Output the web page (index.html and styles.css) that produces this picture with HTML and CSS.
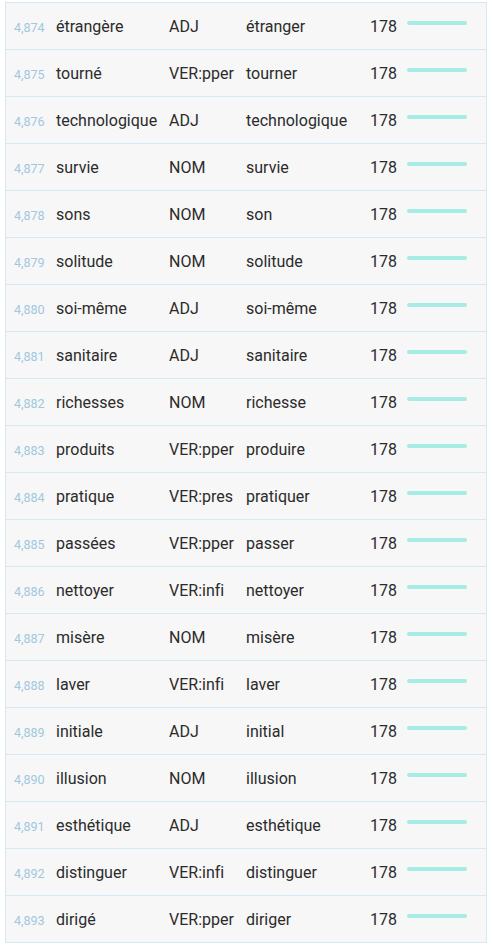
FILE: index.html
```html
<!DOCTYPE html>
<html lang="fr">
<head>
  <meta charset="UTF-8" />
  <meta name="viewport" content="width=device-width, initial-scale=1.0"/>
  <title>Fréquence des mots</title>
  <link rel="stylesheet" href="styles.css">
</head>
<body>
  <div class="word-table">
    <div class="row"><span class="rank">4,874</span><span>étrangère</span><span>ADJ</span><span>étranger</span><span class="count">178</span><span class="bar"><i style="width: 60px"></i></span></div>
    <div class="row"><span class="rank">4,875</span><span>tourné</span><span>VER:pper</span><span>tourner</span><span class="count">178</span><span class="bar"><i style="width: 60px"></i></span></div>
    <div class="row"><span class="rank">4,876</span><span>technologique</span><span>ADJ</span><span>technologique</span><span class="count">178</span><span class="bar"><i style="width: 60px"></i></span></div>
    <div class="row"><span class="rank">4,877</span><span>survie</span><span>NOM</span><span>survie</span><span class="count">178</span><span class="bar"><i style="width: 60px"></i></span></div>
    <div class="row"><span class="rank">4,878</span><span>sons</span><span>NOM</span><span>son</span><span class="count">178</span><span class="bar"><i style="width: 60px"></i></span></div>
    <div class="row"><span class="rank">4,879</span><span>solitude</span><span>NOM</span><span>solitude</span><span class="count">178</span><span class="bar"><i style="width: 60px"></i></span></div>
    <div class="row"><span class="rank">4,880</span><span>soi-même</span><span>ADJ</span><span>soi-même</span><span class="count">178</span><span class="bar"><i style="width: 60px"></i></span></div>
    <div class="row"><span class="rank">4,881</span><span>sanitaire</span><span>ADJ</span><span>sanitaire</span><span class="count">178</span><span class="bar"><i style="width: 60px"></i></span></div>
    <div class="row"><span class="rank">4,882</span><span>richesses</span><span>NOM</span><span>richesse</span><span class="count">178</span><span class="bar"><i style="width: 60px"></i></span></div>
    <div class="row"><span class="rank">4,883</span><span>produits</span><span>VER:pper</span><span>produire</span><span class="count">178</span><span class="bar"><i style="width: 60px"></i></span></div>
    <div class="row"><span class="rank">4,884</span><span>pratique</span><span>VER:pres</span><span>pratiquer</span><span class="count">178</span><span class="bar"><i style="width: 60px"></i></span></div>
    <div class="row"><span class="rank">4,885</span><span>passées</span><span>VER:pper</span><span>passer</span><span class="count">178</span><span class="bar"><i style="width: 60px"></i></span></div>
    <div class="row"><span class="rank">4,886</span><span>nettoyer</span><span>VER:infi</span><span>nettoyer</span><span class="count">178</span><span class="bar"><i style="width: 60px"></i></span></div>
    <div class="row"><span class="rank">4,887</span><span>misère</span><span>NOM</span><span>misère</span><span class="count">178</span><span class="bar"><i style="width: 60px"></i></span></div>
    <div class="row"><span class="rank">4,888</span><span>laver</span><span>VER:infi</span><span>laver</span><span class="count">178</span><span class="bar"><i style="width: 60px"></i></span></div>
    <div class="row"><span class="rank">4,889</span><span>initiale</span><span>ADJ</span><span>initial</span><span class="count">178</span><span class="bar"><i style="width: 60px"></i></span></div>
    <div class="row"><span class="rank">4,890</span><span>illusion</span><span>NOM</span><span>illusion</span><span class="count">178</span><span class="bar"><i style="width: 60px"></i></span></div>
    <div class="row"><span class="rank">4,891</span><span>esthétique</span><span>ADJ</span><span>esthétique</span><span class="count">178</span><span class="bar"><i style="width: 60px"></i></span></div>
    <div class="row"><span class="rank">4,892</span><span>distinguer</span><span>VER:infi</span><span>distinguer</span><span class="count">178</span><span class="bar"><i style="width: 60px"></i></span></div>
    <div class="row"><span class="rank">4,893</span><span>dirigé</span><span>VER:pper</span><span>diriger</span><span class="count">178</span><span class="bar"><i style="width: 60px"></i></span></div>
  </div>
</body>
</html>
```

FILE: styles.css
```css
* {
  box-sizing: border-box;
}
body {
  margin: 0;
  padding: 2px 0 0 5px;
  background-color: #fff;
  font-family: Roboto, 'Noto Sans', sans-serif;
  font-variant-ligatures: none;
  color: #2b2b2b;
}
.word-table {
  width: 482px;
  background-color: #f7f7f7;
  border-left: 1px solid #d3eaf5;
  border-right: 1px solid #d3eaf5;
  border-bottom: 1px solid #d3eaf5;
}
.row {
  display: grid;
  grid-template-columns: 50px 113px 77px 114px 37px 80px;
  align-items: baseline;
  height: 47px;
  padding-top: 1px;
  line-height: 46px;
  border-top: 1px solid #d3eaf5;
  font-size: 16px;
}
.row > span {
  white-space: nowrap;
}
.rank {
  padding-left: 8px;
  font-size: 12.5px;
  color: #a0c8de;
}
.count {
  text-align: right;
}
.bar {
  align-self: start;
  line-height: normal;
  padding: 17px 0 0 10px;
}
.bar i {
  display: block;
  height: 4px;
  border-radius: 2px;
  background-color: #a6ebe4;
}
```
